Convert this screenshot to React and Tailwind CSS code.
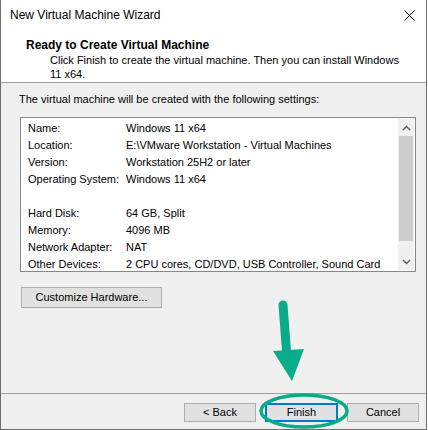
import React from 'react';

const rows = [
  ['Name:', 'Windows 11 x64'],
  ['Location:', 'E:\\VMware Workstation - Virtual Machines'],
  ['Version:', 'Workstation 25H2 or later'],
  ['Operating System:', 'Windows 11 x64'],
  ['', ''],
  ['Hard Disk:', '64 GB, Split'],
  ['Memory:', '4096 MB'],
  ['Network Adapter:', 'NAT'],
  ['Other Devices:', '2 CPU cores, CD/DVD, USB Controller, Sound Card'],
];

const WinButton = ({ children, focused, className = '' }) => (
  <div
    className={`flex items-center justify-center bg-[#e1e1e1] ${
      focused ? 'border-2 border-[#0078d7]' : 'border border-[#adadad]'
    } ${className}`}
  >
    {children}
  </div>
);

const App = () => {
  return (
    <div className="relative w-[428px] h-[430px] bg-white font-['Liberation_Sans',Arial,sans-serif] text-[11px] text-black overflow-hidden">
      <div className="flex flex-col w-[427px] h-[430px] border-l border-r border-b border-[#6e6e6e]">
        {/* Title bar */}
        <div className="flex items-center justify-between h-[30px] pl-[9px] pr-[8px] bg-white">
          <span className="text-[12px]">New Virtual Machine Wizard</span>
          <svg width="11" height="11" viewBox="0 0 11 11" className="mr-[3px]">
            <path d="M0.5 0.5 L10.5 10.5 M10.5 0.5 L0.5 10.5" stroke="#000" strokeWidth="1" />
          </svg>
        </div>

        {/* Header */}
        <div className="h-[53px] bg-white border-b border-[#a0a0a0] pl-[25px] pt-[7px]">
          <div className="font-bold text-[12px] leading-[16px]">Ready to Create Virtual Machine</div>
          <div className="pl-[24px] pr-[20px] leading-[14px]">
            Click Finish to create the virtual machine. Then you can install Windows 11 x64.
          </div>
        </div>

        {/* Body */}
        <div className="flex-1 flex flex-col bg-[#f0f0f0]">
          <div className="pl-[18px] pt-[9px] leading-[15px]">
            The virtual machine will be created with the following settings:
          </div>
          <div className="flex ml-[19px] mr-[10px] mt-[10px] h-[155px] bg-white border border-[#828790]">
            <div className="flex-1 pl-[7px] pt-[2px]">
              {rows.map(([k, v], i) => (
                <div key={i} className="flex h-[17px] items-center">
                  <span className="w-[98px] shrink-0">{k}</span>
                  <span className="whitespace-nowrap">{v}</span>
                </div>
              ))}
            </div>
            <div className="flex flex-col w-[16px] my-[1px] mr-[1px] bg-[#f0f0f0]">
              <div className="h-[17px] flex items-center justify-center">
                <svg width="9" height="6" viewBox="0 0 9 6">
                  <path d="M1 5 L4.5 1.5 L8 5" stroke="#606060" strokeWidth="1.4" fill="none" />
                </svg>
              </div>
              <div className="h-[105px] mx-[1px] bg-[#cdcdcd]" />
              <div className="flex-1" />
              <div className="h-[17px] flex items-center justify-center">
                <svg width="9" height="6" viewBox="0 0 9 6">
                  <path d="M1 1 L4.5 4.5 L8 1" stroke="#606060" strokeWidth="1.4" fill="none" />
                </svg>
              </div>
            </div>
          </div>

          <div className="pl-[20px] pt-[15px]">
            <WinButton className="w-[141px] h-[21px]">Customize Hardware...</WinButton>
          </div>

          <div className="flex-1" />

          <div className="border-t border-[#a0a0a0] h-[36px] flex items-start justify-end gap-[9px] pr-[7px] pt-[9px]">
            <WinButton className="w-[72px] h-[19px]">&lt; Back</WinButton>
            <WinButton className="w-[73px] h-[19px]" focused>Finish</WinButton>
            <WinButton className="w-[72px] h-[19px]">Cancel</WinButton>
          </div>
        </div>
      </div>

      {/* Annotation overlay */}
      <svg className="absolute left-0 top-0 pointer-events-none" width="428" height="430" viewBox="0 0 428 430">
        <path d="M283 305 L287 358" stroke="#0aab88" strokeWidth="9" strokeLinecap="round" fill="none" />
        <path d="M273 351 L304 349 L292 381 Z" fill="#0aab88" />
        <ellipse cx="304" cy="411" rx="43" ry="16" stroke="#0aab88" strokeWidth="3.5" fill="none" />
      </svg>
    </div>
  );
};

export default App;
